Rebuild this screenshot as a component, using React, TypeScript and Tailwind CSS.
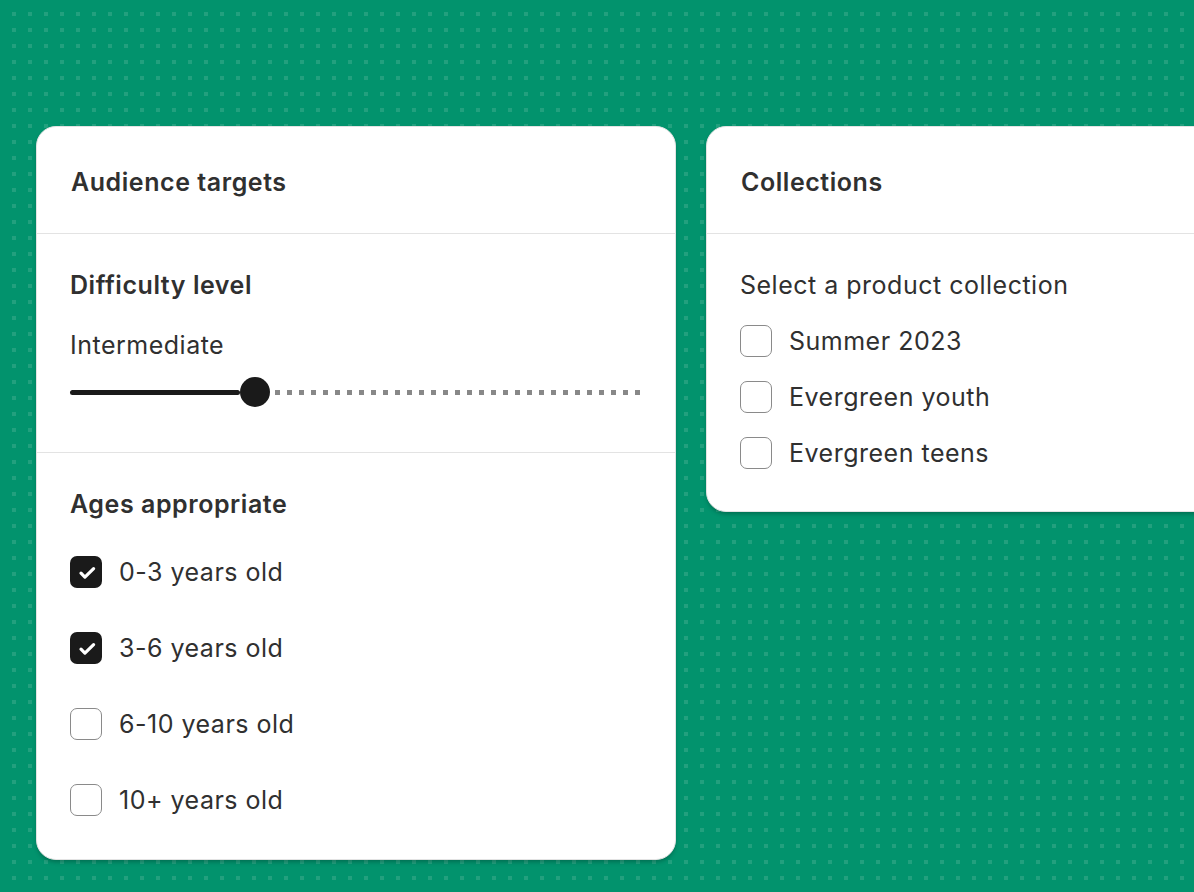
type Option = { label: string; checked?: boolean };

const ages: Option[] = [
  { label: '0-3 years old', checked: true },
  { label: '3-6 years old', checked: true },
  { label: '6-10 years old' },
  { label: '10+ years old' },
];

const collections: Option[] = [
  { label: 'Summer 2023' },
  { label: 'Evergreen youth' },
  { label: 'Evergreen teens' },
];

function Checkbox({ checked }: { checked?: boolean }) {
  if (checked) {
    return (
      <span className="flex h-8 w-8 flex-none items-center justify-center rounded-[7px] bg-[#1a1a1a]">
        <svg width="32" height="32" viewBox="0 0 32 32" fill="none">
          <path
            d="M11 17.2 14.9 21.1 23.6 12.6"
            stroke="#fff"
            strokeWidth="3.2"
            strokeLinecap="round"
            strokeLinejoin="round"
          />
        </svg>
      </span>
    );
  }
  return <span className="h-8 w-8 flex-none rounded-[7px] border border-[#8a8a8a] bg-white" />;
}

function CheckRow({ option }: { option: Option }) {
  return (
    <label className="flex h-8 items-center gap-[17px]">
      <Checkbox checked={option.checked} />
      <span className="text-[25px] leading-8 tracking-[0.5px] text-[#303030]">{option.label}</span>
    </label>
  );
}

function Card({ title, className, children }: { title: string; className?: string; children: React.ReactNode }) {
  return (
    <div
      className={`flex-none overflow-hidden rounded-[20px] border border-[#e3e3e3] bg-white shadow-[0_3px_4px_-1px_rgba(0,0,0,0.25)] ${className ?? ''}`}
    >
      <div className="flex h-[106px] items-center px-[34px]">
        <h2 className="pt-[3px] text-[25px] font-[560] leading-8 tracking-[0.55px] text-[#303030]">{title}</h2>
      </div>
      {children}
    </div>
  );
}

// filled track, thumb, then the remaining range as a dotted line
function Slider() {
  return (
    <div className="flex h-[30px] items-center">
      <div className="h-[5px] w-[170px] flex-none rounded-full bg-[#1a1a1a]" />
      <div className="h-[30px] w-[30px] flex-none rounded-full bg-[#1a1a1a]" />
      <div className="ml-[5px] h-[5px] flex-1 bg-[repeating-linear-gradient(90deg,#888888_0_5px,transparent_5px_12px)]" />
    </div>
  );
}

export default function App() {
  return (
    <div
      className="flex h-[892px] w-[1194px] gap-[30px] overflow-hidden bg-[#02936d] bg-[conic-gradient(at_4px_4px,transparent_75%,#22a07e_0)] bg-[length:16px_16px] bg-[position:12px_12px] pl-9 pt-[126px] text-[#303030]"
      style={{ fontFamily: 'Inter, "Noto Sans", sans-serif' }}
    >
      <Card title="Audience targets" className="h-[734px] w-[640px]">
        <div className="border-t border-[#e3e3e3] px-[33px] pb-[45px] pt-[35px]">
          <h3 className="text-[25px] font-[560] leading-8 tracking-[0.55px]">Difficulty level</h3>
          <p className="mt-7 text-[25px] leading-8 tracking-[0.5px]">Intermediate</p>
          <div className="mt-4">
            <Slider />
          </div>
        </div>
        <div className="border-t border-[#e3e3e3] px-[33px] pt-[35px]">
          <h3 className="text-[25px] font-[560] leading-8 tracking-[0.55px]">Ages appropriate</h3>
          <div className="mt-9 flex flex-col gap-11">
            {ages.map((a) => (
              <CheckRow key={a.label} option={a} />
            ))}
          </div>
        </div>
      </Card>

      <Card title="Collections" className="h-[386px] w-[640px]">
        <div className="border-t border-[#e3e3e3] px-[33px] pt-[35px]">
          <p className="text-[25px] leading-8 tracking-[0.5px]">Select a product collection</p>
          <div className="mt-6 flex flex-col gap-6">
            {collections.map((c) => (
              <CheckRow key={c.label} option={c} />
            ))}
          </div>
        </div>
      </Card>
    </div>
  );
}
